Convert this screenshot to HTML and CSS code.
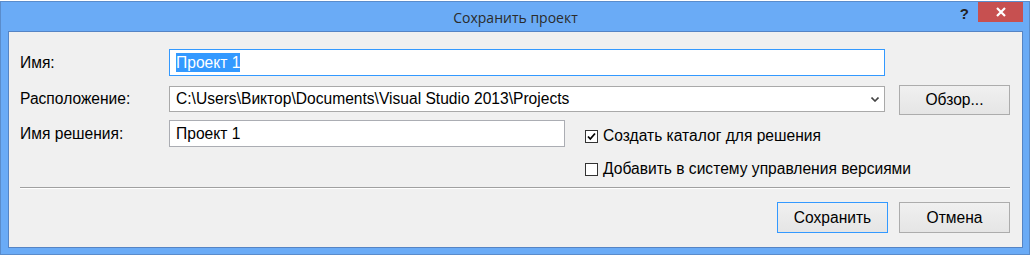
FILE: index.html
```html
<!DOCTYPE html>
<html lang="ru">
  <head>
    <meta charset="UTF-8" />
    <meta name="viewport" content="width=device-width, initial-scale=1.0" />
    <title>Сохранить проект</title>
    <link rel="stylesheet" href="styles.css">
  </head>
  <body>
    <div class="window">
      <div class="titleBar">
        <span class="title">Сохранить проект</span>
        <span class="helpBtn">?</span>
        <span class="closeBtn">
          <svg width="10" height="10" viewBox="0 0 10 10">
            <path d="M1 1 L9 9 M9 1 L1 9" stroke="#fff" stroke-width="2.2" />
          </svg>
        </span>
      </div>
      <div class="client">
        <div class="row rowName">
          <label class="label">Имя:</label>
          <div class="field focused wide"><span class="selected">Проект 1</span></div>
        </div>
        <div class="row rowPlace">
          <label class="label">Расположение:</label>
          <div class="field combo wide">
            <span>C:\Users\Виктор\Documents\Visual Studio 2013\Projects</span>
            <svg class="arrow" width="8" height="5" viewBox="0 0 8 5">
              <path d="M0.5 0.5 L4 4 L7.5 0.5" fill="none" stroke="#444" stroke-width="1.6" />
            </svg>
          </div>
          <button class="btn browseBtn">Обзор...</button>
        </div>
        <div class="row rowSolution">
          <label class="label">Имя решения:</label>
          <div class="field narrow">Проект 1</div>
          <div class="checks">
            <div class="checkItem">
              <span class="checkBox">
                <svg width="11" height="11" viewBox="0 0 11 11">
                  <path d="M2 5.5 L4.3 8 L9 2.5" fill="none" stroke="#000" stroke-width="1.8" />
                </svg>
              </span>
              Создать каталог для решения
            </div>
            <div class="checkItem">
              <span class="checkBox"></span>
              Добавить в систему управления версиями
            </div>
          </div>
        </div>
        <div class="separator"></div>
        <div class="buttons">
          <button class="btn defaultBtn">Сохранить</button>
          <button class="btn">Отмена</button>
        </div>
      </div>
    </div>
  </body>
</html>
```

FILE: styles.css
```css
body {
  font-family: "Liberation Sans", Arial, sans-serif;
  margin: 0;
  background-color: #ffffff;
}
.window {
  box-sizing: border-box;
  width: 1030px;
  height: 254px;
  margin-top: 1px;
  background-color: #6aabf6;
  border: 1px solid #5a8ccb;
  padding: 0 6px 6px 7px;
}
.titleBar {
  height: 29px;
  position: relative;
}
.title {
  position: absolute;
  left: 0;
  right: 0;
  top: 6px;
  text-align: center;
  font-family: "Open Sans", sans-serif;
  font-size: 14px;
  color: #2b2b2b;
}
.helpBtn {
  position: absolute;
  right: 54px;
  top: 3px;
  font-weight: bold;
  font-size: 15px;
  color: #222;
}
.closeBtn {
  position: absolute;
  right: 0;
  top: 0;
  width: 45px;
  height: 20px;
  background-color: #c75050;
  display: flex;
  align-items: center;
  justify-content: center;
}
.client {
  box-sizing: border-box;
  height: 217px;
  background-color: #f0f0f0;
  border: 1px solid #5584c4;
  padding: 17px 12px 0 11px;
  font-size: 15.6px;
  color: #000;
}
.row {
  display: flex;
  align-items: flex-start;
}
.label {
  width: 149px;
  height: 27px;
  display: flex;
  align-items: center;
}
.field {
  box-sizing: border-box;
  height: 27px;
  background-color: #fff;
  border: 1px solid #abadb3;
  padding: 0 6px;
  display: flex;
  align-items: center;
  white-space: nowrap;
}
.wide {
  width: 716px;
}
.narrow {
  width: 396px;
}
.focused {
  border-color: #3399ff;
}
.selected {
  background-color: #3399ff;
  color: #fff;
  line-height: 19px;
}
.rowPlace {
  margin-top: 9px;
}
.rowPlace .label {
  height: 28px;
}
.combo {
  height: 26px;
  margin-top: 1px;
  justify-content: space-between;
  border-color: #a9a9a9;
  padding-right: 5px;
}
.btn {
  box-sizing: border-box;
  width: 111px;
  height: 30px;
  font-family: "Liberation Sans", Arial, sans-serif;
  font-size: 15.6px;
  color: #000;
  background: linear-gradient(#f0f0f0, #e5e5e5);
  border: 1px solid #acacac;
  padding: 0;
}
.browseBtn {
  margin-left: 14px;
}
.rowSolution {
  margin-top: 5px;
}
.checks {
  margin-left: 20px;
  margin-top: 6px;
  display: flex;
  flex-direction: column;
  gap: 13px;
}
.checkItem {
  height: 20px;
  display: flex;
  align-items: center;
  white-space: nowrap;
}
.checkBox {
  box-sizing: border-box;
  width: 13px;
  height: 13px;
  border: 1px solid #333;
  background-color: #fff;
  margin-right: 5px;
  display: flex;
  align-items: center;
  justify-content: center;
}
.separator {
  margin-top: 8px;
  height: 1px;
  background-color: #a0a0a0;
  border-bottom: 1px solid #fff;
}
.buttons {
  margin-top: 13px;
  display: flex;
  justify-content: flex-end;
  gap: 11px;
}
.buttons .btn {
  height: 31px;
}
.defaultBtn {
  border-color: #3399ff;
}
```
